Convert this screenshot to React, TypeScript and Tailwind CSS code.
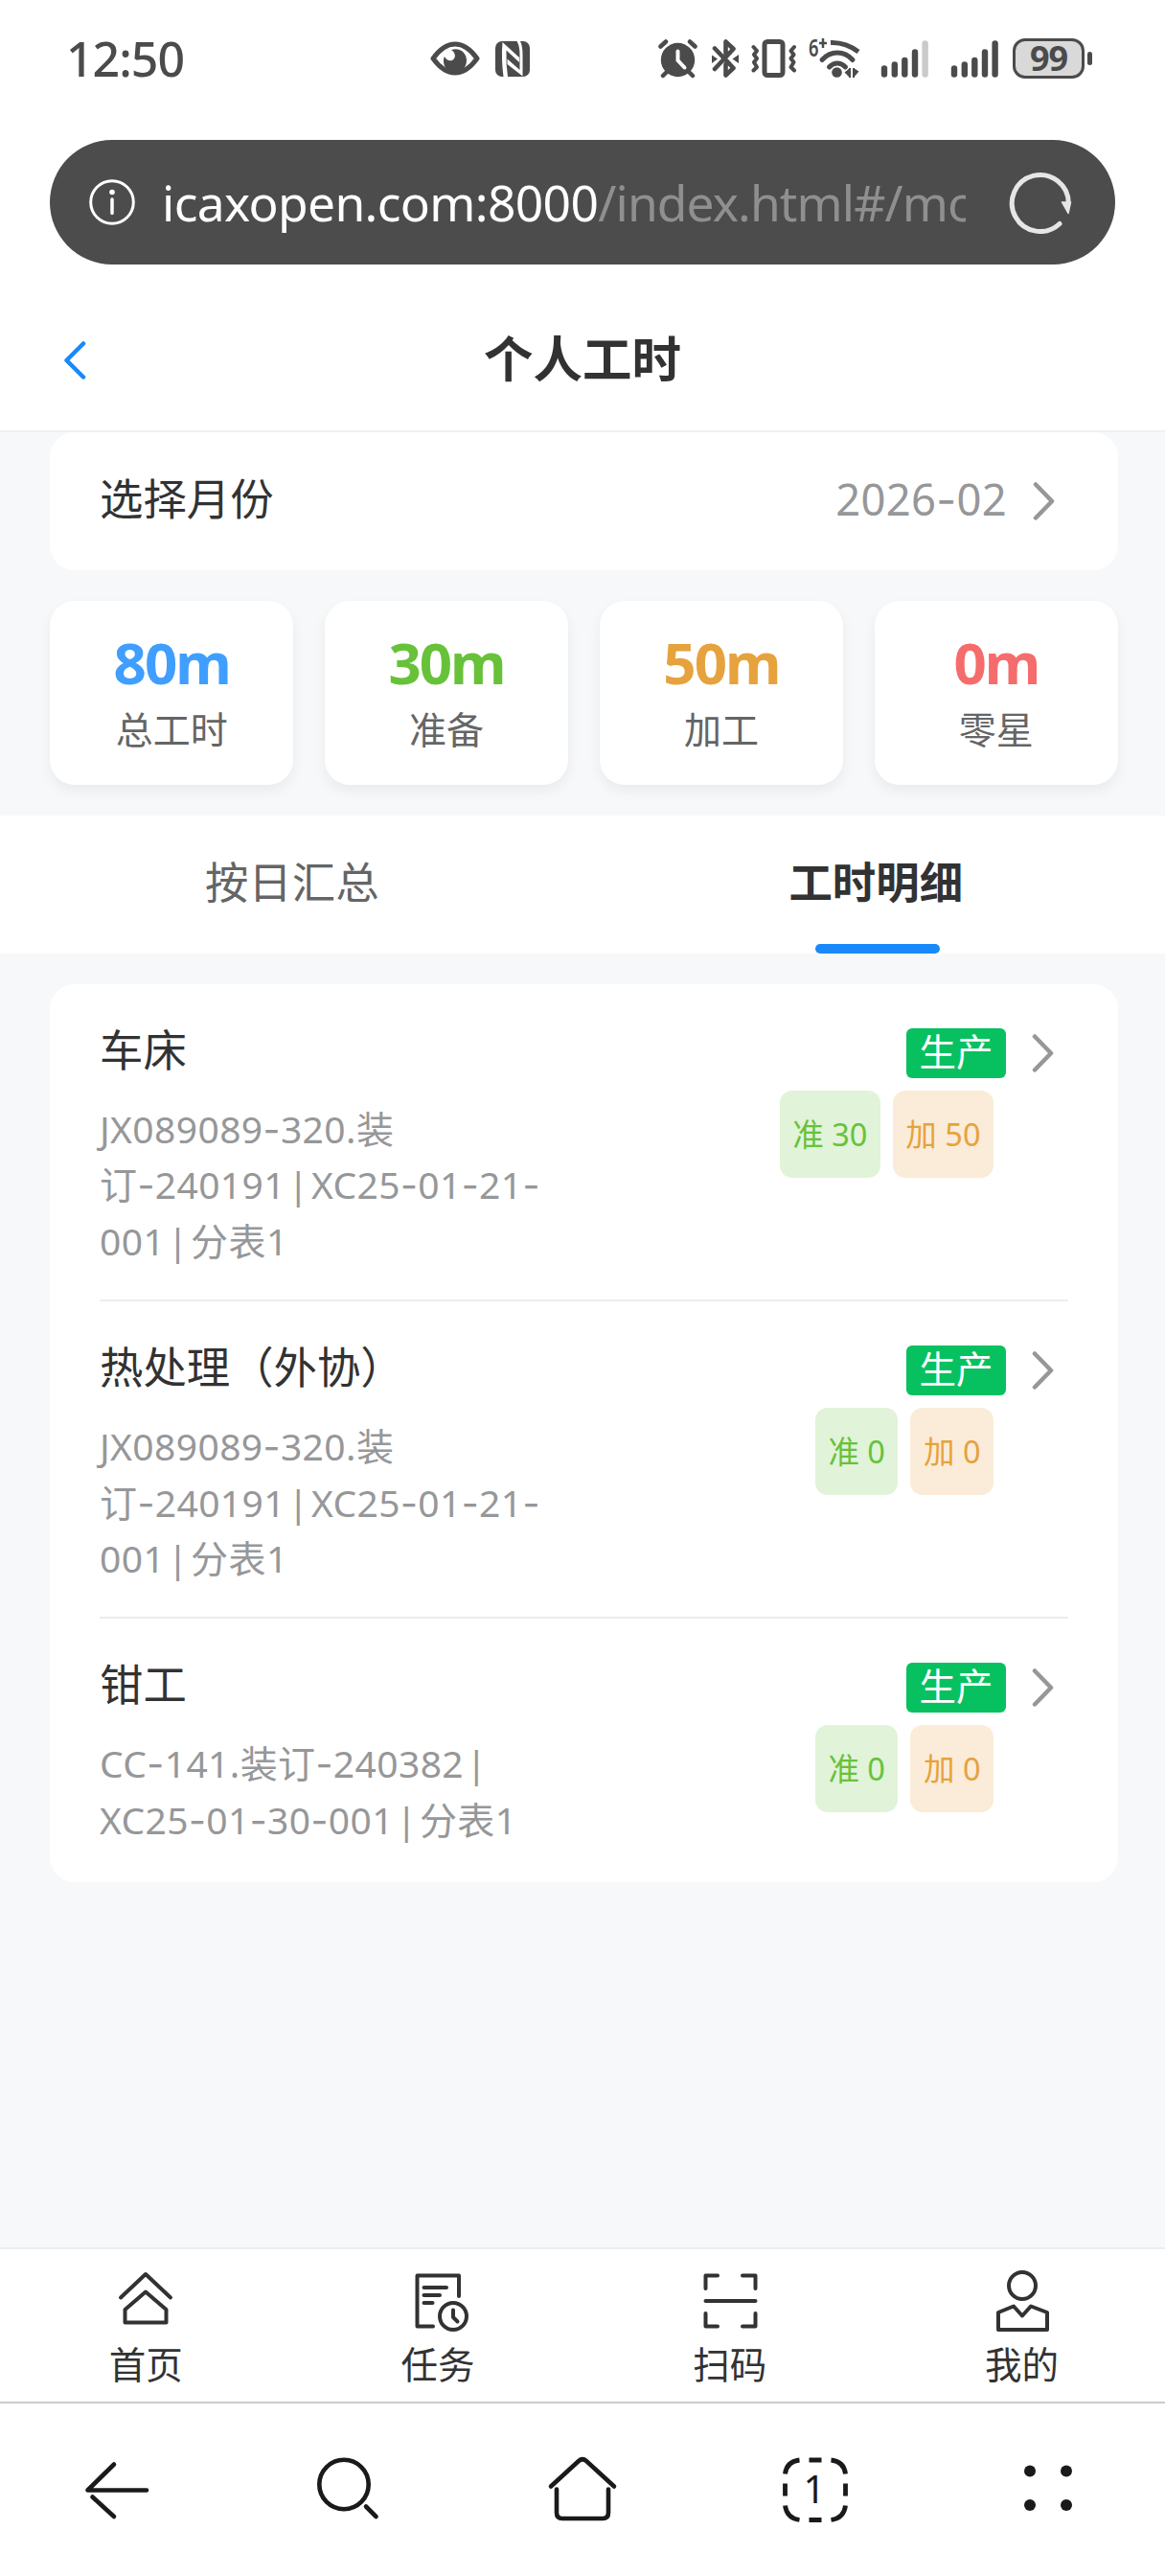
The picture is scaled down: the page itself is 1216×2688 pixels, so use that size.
import type { ReactNode } from 'react';

type Stat = { value: string; label: string; color: string };

type WorkItem = {
  name: string;
  tag: string;
  detail: string[];
  prepare: number;
  process: number;
};

const stats: Stat[] = [
  { value: '80m', label: '总工时', color: 'text-[#409eff]' },
  { value: '30m', label: '准备', color: 'text-[#67c23a]' },
  { value: '50m', label: '加工', color: 'text-[#e6a23c]' },
  { value: '0m', label: '零星', color: 'text-[#f56c6c]' },
];

const items: WorkItem[] = [
  {
    name: '车床',
    tag: '生产',
    detail: ['JX089089-320.装', '订-240191 | XC25-01-21-', '001 | 分表1'],
    prepare: 30,
    process: 50,
  },
  {
    name: '热处理（外协）',
    tag: '生产',
    detail: ['JX089089-320.装', '订-240191 | XC25-01-21-', '001 | 分表1'],
    prepare: 0,
    process: 0,
  },
  {
    name: '钳工',
    tag: '生产',
    detail: ['CC-141.装订-240382 |', 'XC25-01-30-001 | 分表1'],
    prepare: 0,
    process: 0,
  },
];

// Codes and dates use the wider, raised Inter hyphen
function Code({ text }: { text: string }) {
  return (
    <>
      {text.split(/(-)/).map((part, i) =>
        part === '-' ? <span key={i} className="font-['Inter']">-</span> : part,
      )}
    </>
  );
}

function Chevron() {
  return (
    <svg width="24" height="42" viewBox="0 0 24 42" fill="none" stroke="#969799" strokeWidth="4.5" strokeLinecap="round" strokeLinejoin="round" className="shrink-0">
      <path d="M3 3.5 20 21 3 38.5" />
    </svg>
  );
}

function SignalBars({ weak }: { weak?: boolean }) {
  return (
    <svg width="51" height="40" viewBox="0 0 51 40" stroke="#4b4b4b" strokeWidth="6.4" strokeLinecap="round">
      <path d="M4 30.5V36.5" />
      <path d="M14.8 26.5V36.5" />
      <path d="M25.3 22V36.5" />
      <path d="M36 13.5V36.5" />
      <path d="M46.6 4.5V36.5" stroke={weak ? '#cacaca' : '#4b4b4b'} />
    </svg>
  );
}

function StatusBar() {
  return (
    <div className="flex h-[146px] items-start pt-[40px] text-[#4b4b4b]">
      <div className="ml-[69px] w-[380px] text-[50px] leading-[43px] font-medium tracking-[-1px]">12:50</div>

      <div className="flex w-[238px] gap-[16px] pt-[3px]">
        {/* Eye comfort */}
        <svg width="52" height="36" viewBox="0 0 52 36">
          <path d="M3 18C11 7 18 3 26 3s15 4 23 15c-8 11-15 15-23 15S11 29 3 18Z" fill="none" stroke="#4b4b4b" strokeWidth="5" strokeLinejoin="round" />
          <path d="M22 9c9-3 16 3 16 11 0 7-5 13-12 13s-12-6-12-12c0-2 0-3 1-5 2 4 5 5 8 4 4-2 4-8-1-11Z" fill="#4b4b4b" />
        </svg>
        {/* NFC */}
        <svg width="36" height="37" viewBox="0 0 36 37">
          <rect width="36" height="37" rx="7" fill="#4b4b4b" />
          <path d="M7.5 1 25 17V22L11.500 9.500Q11 24 13 37H8.500Q6 18 7.500 1Z" fill="#fff" />
          <path d="M26 0q2.500 5 2.500 14V36.500L12.500 24V18.500L25.500 30V14Q25.500 5 22.500 0Z" fill="#fff" />
        </svg>
      </div>

      <div className="flex items-start">
        {/* Alarm */}
        <svg width="41" height="42" viewBox="0 0 41 42" fill="none" stroke="#4b4b4b" strokeWidth="4.5" strokeLinecap="round">
          <circle cx="20.5" cy="22.5" r="17.7" fill="#4b4b4b" stroke="none" />
          <path d="M2.5 8.5 8 3.5M38.5 8.5 33 3.5M10 34 5 39M31 34l5 5" />
          <path d="M20.5 13.5V23l7 7.5" stroke="#fff" strokeWidth="4" />
        </svg>
        {/* Bluetooth, connected */}
        <svg width="28" height="42" viewBox="0 0 28 42" className="ml-[15px]" fill="none" stroke="#4b4b4b" strokeWidth="4.6" strokeLinecap="round" strokeLinejoin="round">
          <path d="M3 10.5 22.5 31 14.500 38.500V27M3 32 22.500 11 14.500 3.500V16" />
          <path d="M0 17.500l6 4-6 4.500ZM28 17v9l-6.500-4.500Z" fill="#4b4b4b" stroke="none" />
        </svg>
        {/* Vibrate */}
        <svg width="48" height="42" viewBox="0 0 48 42" className="ml-[13px]" fill="none" stroke="#4b4b4b" strokeWidth="5" strokeLinecap="round" strokeLinejoin="round">
          <rect x="14" y="3.5" width="19" height="35" rx="3" />
          <path d="M2.500 9l3.500 4-3 4 3 4-3 4 3 5-3.500 3.500M45 9l-3.500 4 3 4-3 4 3 4-3 5 3.500 3.500" strokeWidth="4" />
        </svg>
        {/* Wi-Fi 6+ */}
        <svg width="55" height="42" viewBox="0 0 55 42" className="ml-[12px] overflow-visible" fill="none" stroke="#4b4b4b" strokeWidth="5">
          <path d="M23 4.5C35 4 44 8 52 14" strokeWidth="5" />
          <path d="M14 22.500c9-10 23-10 32 0" strokeLinecap="round" />
          <path d="M21.500 30c5-5.500 12-5.500 17 0" strokeLinecap="round" />
          <circle cx="29.500" cy="35.500" r="5.300" fill="#4b4b4b" stroke="none" />
          <path d="M43 31v10M47 31v10" strokeWidth="2" />
          <path d="M43 31v10l-5.500-5.500ZM47 41v-10l5.500 3.500Z" fill="#4b4b4b" stroke="none" />
          <text x="0" y="18.500" fontSize="25" fontWeight="600" fill="#4b4b4b" stroke="none" textLength="10.500" lengthAdjust="spacingAndGlyphs">6</text>
          <path d="M11 5h8M15 0v10" strokeWidth="2.500" />
        </svg>
        <div className="ml-[20px] pt-px">
          <SignalBars weak />
        </div>
        <div className="ml-[22px] pt-px">
          <SignalBars />
        </div>
        <div className="ml-[14px] flex items-center gap-[3px]">
          <div className="flex h-[42px] w-[75px] items-center justify-center rounded-[13px] border-[3.5px] border-[#4b4b4b] bg-[#d9d9d9] text-[36px] leading-none font-bold tracking-[-1px]">99</div>
          <div className="h-[14px] w-[5px] rounded-full bg-[#4b4b4b]" />
        </div>
      </div>
    </div>
  );
}

function AddressBar() {
  return (
    <div className="mx-[52px] flex h-[130px] items-center rounded-full bg-[#4c4c4c] pl-[41px]">
      <svg width="48" height="48" viewBox="0 0 48 48" fill="none" stroke="#fff" className="shrink-0">
        <circle cx="24" cy="24" r="22.3" strokeWidth="3" />
        <path d="M24 21v14.5" strokeWidth="3.5" strokeLinecap="round" />
        <circle cx="24" cy="13.5" r="2.8" fill="#fff" stroke="none" />
      </svg>
      <div className="ml-[28px] w-[839px] overflow-hidden text-[51.5px] leading-[76px] tracking-[-0.65px] whitespace-nowrap text-white">
        icaxopen.com:8000<span className="tracking-[-0.9px] text-[#8f8f8f]">/index.html#/mo</span>
      </div>
      <svg width="66" height="66" viewBox="0 0 66 66" fill="none" className="ml-[45px] shrink-0">
        <path d="M53 55.5A29.5 29.5 0 1 1 62.3 34" stroke="#e6e6e6" strokeWidth="5" strokeLinecap="round" />
        <path d="M55.5 33h9l-2.5 11.5Z" fill="#e6e6e6" stroke="#e6e6e6" strokeWidth="1.5" strokeLinejoin="round" />
      </svg>
    </div>
  );
}

function NavHeader() {
  return (
    <header className="grid h-[175px] grid-cols-[1fr_auto_1fr] items-center border-b-2 border-[#f0f0f1] pt-[22px]">
      <svg width="25" height="42" viewBox="0 0 25 42" fill="none" stroke="#1989fa" strokeWidth="4.5" strokeLinecap="round" strokeLinejoin="round" className="mt-[5px] ml-[65px]">
        <path d="M22 3.5 4.5 21 22 38.5" />
      </svg>
      <h1 className="text-[51.5px] leading-[70px] font-semibold text-[#323233]">个人工时</h1>
      <span />
    </header>
  );
}

function StatCard({ value, label, color }: Stat) {
  return (
    <div className="flex h-[192px] flex-col items-center rounded-[26px] bg-white pt-[26px] shadow-[0_6px_14px_rgba(0,0,0,0.06)]">
      <div className={`text-[60px] leading-[76px] font-bold tracking-[-2px] ${color}`}>{value}</div>
      <div className="mt-[4px] text-[39px] leading-[56px] text-[#646566]">{label}</div>
    </div>
  );
}

function WorkRow({ item, last }: { item: WorkItem; last: boolean }) {
  return (
    <div className={`mx-[52px] flex items-start justify-between pt-[34px] ${last ? 'pb-[36px]' : 'border-b-2 border-[#ebedf0] pb-[32px]'}`}>
      <div>
        <div className="text-[45.4px] leading-[68px] text-[#323233]">{item.name}</div>
        <div className="mt-[20px] text-[39px] leading-[58.4px] tracking-[0.4px] text-[#969799] [word-spacing:-8px]">
          {item.detail.map((line) => (
            <div key={line} className="h-[58.4px] whitespace-nowrap"><Code text={line} /></div>
          ))}
        </div>
      </div>
      <div className="mr-[14px] flex flex-col pt-[12px]">
        <div className="flex items-center justify-end">
          <span className="flex h-[52px] w-[104px] items-center justify-center rounded-[6px] bg-[#07c160] pb-[4px] text-[38.5px] leading-none text-white">{item.tag}</span>
          <span className="ml-[27px]"><Chevron /></span>
        </div>
        <div className="mt-[13px] mr-[64px] flex justify-end gap-[13px] text-[32.5px] leading-[91px]">
          <span className="rounded-[13px] bg-[#e1f3d8] px-[13.5px] text-[#67c23a]">准 {item.prepare}</span>
          <span className="rounded-[13px] bg-[#faecd8] px-[13.5px] text-[#e6a23c]">加 {item.process}</span>
        </div>
      </div>
    </div>
  );
}

function TabItem({ label, children }: { label: string; children: ReactNode }) {
  return (
    <div className="flex flex-1 flex-col items-center pt-[20px]">
      <svg width="66" height="70" viewBox="0 0 66 70" fill="none" stroke="#323233" strokeWidth="4" strokeLinecap="round" strokeLinejoin="round">
        {children}
      </svg>
      <span className="mt-[2px] text-[38.5px] leading-[56px] text-[#323233]">{label}</span>
    </div>
  );
}

function TabBar() {
  return (
    <nav className="flex h-[161px] w-[1219px] border-t-2 border-[#ebedf0] bg-white">
      <TabItem label="首页">
        <path d="M7 30.5 33 6l26 24.5" />
        <path d="M11.5 56.5V43L33 24.5 54.5 43v13.5H11.5Z" />
      </TabItem>
      <TabItem label="任务">
        <path d="M28 60.5H11.5V7.5H55V29M18.5 20H42M18.5 28H35M18.5 36H27.5" />
        <circle cx="49" cy="50" r="14" />
        <path d="M49 43.5V51l4.5 4.5" />
      </TabItem>
      <TabItem label="扫码">
        <path d="M7.5 21V7.5H20M46 7.5H59.5V21M7.5 47V60.5H20M46 60.5H59.5V47M7.5 34H59.5" />
      </TabItem>
      <TabItem label="我的">
        <circle cx="33" cy="18" r="14" />
        <path d="M24 39.5 8 46V64H59V46L42 39.5 33 49.5Z" />
      </TabItem>
    </nav>
  );
}

function BrowserButton({ children }: { children: ReactNode }) {
  return (
    <div className="flex flex-1 justify-center pt-[52px]">
      <svg width="76" height="76" viewBox="0 0 76 76" fill="none" stroke="currentColor" strokeWidth="4.6" strokeLinecap="round" strokeLinejoin="round">
        {children}
      </svg>
    </div>
  );
}

function BrowserBar() {
  return (
    <nav className="flex h-[182px] border-t-2 border-[#cbcbcb] bg-white text-[#1a1a1a]">
      <BrowserButton>
        <path d="M69 38.5H7.5L35 11.5" />
        <path d="M12.5 45.5 35 66" />
      </BrowserButton>
      <BrowserButton>
        <circle cx="32" cy="32.5" r="25.7" />
        <path d="M55 55.5 65.5 66" />
      </BrowserButton>
      <BrowserButton>
        <path d="M5 34.5 34 8q4-3.5 8 0L71 34.5" />
        <path d="M11 37.5V62q0 6 6 6H59q6 0 6-6V37.5" />
      </BrowserButton>
      <BrowserButton>
        <g strokeWidth="4.8" strokeLinecap="butt">
          <path d="M6.5 21.5Q8 8.5 21.5 7M54.5 7Q68 8.5 69.5 21.5M69.5 54.5Q68 67.5 54.5 69.5M21.5 69.5Q8 67.5 6.5 54.5" />
          <path d="M31.5 7H44.5M31.5 69.5H44.5M6.5 31.5V44.5M69.5 31.5V44.5" />
        </g>
        <text x="37" y="51.5" textAnchor="middle" fontSize="40" fill="currentColor" stroke="none">1</text>
      </BrowserButton>
      <BrowserButton>
        <g fill="currentColor" stroke="none">
          <circle cx="19" cy="18.5" r="6" />
          <circle cx="57" cy="18.5" r="6" />
          <circle cx="19" cy="54" r="6" />
          <circle cx="57" cy="54" r="6" />
        </g>
      </BrowserButton>
    </nav>
  );
}

function App() {
  return (
    <div className="flex h-[2688px] w-[1216px] flex-col overflow-hidden bg-white font-['Noto_Sans','Noto_Sans_CJK_SC',sans-serif]">
      <StatusBar />
      <AddressBar />
      <NavHeader />

      <main className="w-[1219px] flex-1 bg-[#f7f8fa]">
        {/* Month picker */}
        <div className="mx-[52px] flex h-[144px] items-center rounded-[26px] bg-white pr-[65px] pl-[52px]">
          <span className="mb-[6px] flex-1 text-[45.4px] leading-[68px] text-[#323233]">选择月份</span>
          <span className="mr-[27px] mb-[5px] text-[45.4px] leading-[68px] tracking-[0.3px] text-[#969799]"><Code text="2026-02" /></span>
          <Chevron />
        </div>

        <div className="mx-[52px] mt-[32px] grid grid-cols-4 gap-[32.5px]">
          {stats.map((stat) => (
            <StatCard key={stat.label} {...stat} />
          ))}
        </div>

        {/* Tabs */}
        <div className="mt-[32px] grid h-[144px] grid-cols-2 bg-white text-center text-[45.4px]">
          <div className="pt-[35px] leading-[68px] text-[#646566]">按日汇总</div>
          <div className="flex flex-col items-center justify-between pt-[35px] leading-[68px] font-semibold text-[#323233]">
            工时明细
            <span className="ml-[4px] h-[10px] w-[130px] rounded-full bg-[#1989fa]" />
          </div>
        </div>

        <div className="mx-[52px] mt-[32px] rounded-[26px] bg-white">
          {items.map((item, i) => (
            <WorkRow key={item.name} item={item} last={i === items.length - 1} />
          ))}
        </div>
      </main>

      <TabBar />
      <BrowserBar />
    </div>
  );
}

export default App;
